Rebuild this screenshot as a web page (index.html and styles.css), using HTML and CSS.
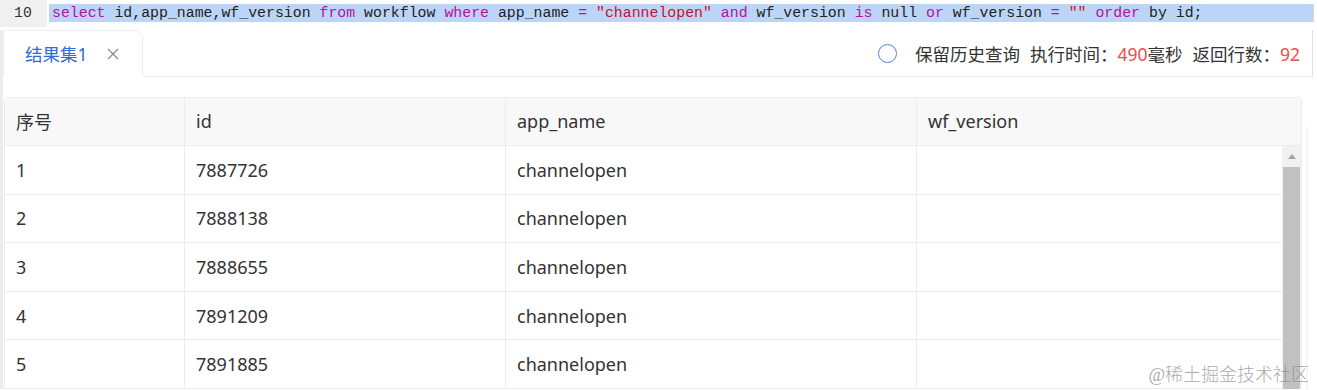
FILE: index.html
```html
<!DOCTYPE html>
<html lang="zh-CN">
<head>
    <meta charset="utf-8">
    <title>SQL 查询结果</title>
    <link rel="stylesheet" href="styles.css">
</head>
<body>
    <div class="editor">
        <div class="gutter">10</div>
        <div class="code"><span class="kw">select</span> id,app_name,wf_version <span class="kw">from</span> workflow <span class="kw">where</span> app_name <span class="kw">=</span> <span class="str">"channelopen"</span> <span class="kw">and</span> wf_version <span class="kw">is</span> null <span class="kw">or</span> wf_version <span class="kw">=</span> <span class="str">""</span> <span class="kw">order</span> by id;</div>
    </div>

    <div class="results">
        <div class="tabs">
            <div class="tab">
                <span class="tab-name">结果集1</span>
                <svg class="tab-close" width="12" height="12" viewBox="0 0 12 12">
                    <path d="M1 1 L11 11 M11 1 L1 11" stroke="#8c8c8c" stroke-width="1.3" fill="none"/>
                </svg>
            </div>
            <div class="tab-rest">
                <span class="radio"></span>
                <span class="info">保留历史查询</span>
                <span class="info">执行时间：<em>490</em>毫秒</span>
                <span class="info">返回行数：<em>92</em></span>
            </div>
        </div>

        <div class="table-wrap">
            <div class="table">
                <div class="row head">
                    <div class="cell">序号</div>
                    <div class="cell">id</div>
                    <div class="cell">app_name</div>
                    <div class="cell">wf_version</div>
                </div>
                <div class="body">
                    <div class="rows">
                        <div class="row">
                            <div class="cell">1</div><div class="cell">7887726</div><div class="cell">channelopen</div><div class="cell"></div>
                        </div>
                        <div class="row">
                            <div class="cell">2</div><div class="cell">7888138</div><div class="cell">channelopen</div><div class="cell"></div>
                        </div>
                        <div class="row">
                            <div class="cell">3</div><div class="cell">7888655</div><div class="cell">channelopen</div><div class="cell"></div>
                        </div>
                        <div class="row">
                            <div class="cell">4</div><div class="cell">7891209</div><div class="cell">channelopen</div><div class="cell"></div>
                        </div>
                        <div class="row">
                            <div class="cell">5</div><div class="cell">7891885</div><div class="cell">channelopen</div><div class="cell"></div>
                        </div>
                    </div>
                    <div class="scrollbar">
                        <div class="arrow"></div>
                        <div class="thumb"></div>
                    </div>
                </div>
            </div>
            <div class="edge"></div>
        </div>
    </div>

    <div class="watermark">@稀土掘金技术社区</div>
</body>
</html>
```

FILE: styles.css
```css
body {
    margin: 0;
    width: 1317px;
    height: 390px;
    overflow: hidden;
    background-color: #fff;
    font-family: "Noto Sans", "Noto Sans CJK SC", sans-serif;
    color: #333;
    position: relative;
}

/* editor line */
.editor {
    display: flex;
    height: 28px;
}

.gutter {
    width: 33px;
    padding-left: 14px;
    padding-top: 4px;
    height: 23px;
    background-color: #f0f0f0;
    font-family: "Liberation Mono", monospace;
    font-size: 14.8px;
    line-height: 18px;
    color: #333;
}

.code {
    margin-left: 2px;
    margin-top: 4px;
    width: 1261px;
    height: 18px;
    padding-left: 3px;
    background-color: #bcd5f7;
    border-right: 1px solid #d6d6d6;
    font-family: "Liberation Mono", monospace;
    font-size: 14.87px;
    line-height: 18px;
    white-space: pre;
    color: #222;
}

.kw {
    color: #b5119b;
}

.str {
    color: #c8102e;
}

/* result tabs */
.results {
    margin-top: 2px;
    border-left: 3px solid #ececec;
}

.tabs {
    display: flex;
    height: 47px;
}

.tab {
    width: 140px;
    height: 46px;
    display: flex;
    align-items: center;
    box-sizing: border-box;
    padding-left: 21px;
    border: 1px solid #efefef;
    border-bottom: none;
    border-radius: 2px 9px 0 0;
    background-color: #fff;
}

.tab-name {
    color: #2f6bd8;
    font-size: 17.5px;
}

.tab-close {
    margin-left: 19px;
    margin-top: 1px;
}

.tab-rest {
    flex: 1;
    display: flex;
    align-items: center;
    justify-content: flex-end;
    padding-right: 12px;
    margin-right: 4px;
    border-bottom: 1px solid #efefef;
    border-right: 1px solid #e0e0e0;
    font-size: 17.5px;
}

.radio {
    width: 17px;
    height: 17px;
    border: 1.5px solid #4f84e3;
    border-radius: 50%;
    margin-right: 8px;
}

.info {
    margin-left: 10px;
    color: #333;
}

.info em {
    font-style: normal;
    color: #ef4a4d;
}

/* table */
.table-wrap {
    display: flex;
    padding-top: 20px;
    padding-left: 1px;
}

.table {
    width: 1296px;
    border: 1px solid #ececec;
    border-radius: 4px 4px 0 0;
    border-bottom: none;
}

.row {
    display: grid;
    grid-template-columns: 180px 321px 411px 1fr;
    height: 48.6px;
    box-sizing: border-box;
    border-bottom: 1px solid #ececec;
}

.head {
    height: 48px;
    background-color: #f8f8f8;
}

.head .cell {
    padding-bottom: 2px;
}

.cell {
    display: flex;
    align-items: center;
    padding-left: 11px;
    font-size: 18px;
    border-right: 1px solid #ececec;
}

.cell:last-child {
    border-right: none;
}

.body {
    display: flex;
}

.rows {
    width: 1277px;
}

.scrollbar {
    width: 19px;
    display: flex;
    flex-direction: column;
    align-items: center;
    background-color: #f1f1f1;
}

.arrow {
    margin-top: 8px;
    width: 0;
    height: 0;
    border-left: 4px solid transparent;
    border-right: 4px solid transparent;
    border-bottom: 5px solid #a3a3a3;
}

.thumb {
    margin-top: 8px;
    width: 17px;
    flex: 1;
    background-color: #c1c1c1;
}

.edge {
    width: 2px;
    margin-left: 4px;
    margin-top: 30px;
    background-color: #f4f4f4;
}

.watermark {
    position: absolute;
    right: 8px;
    bottom: 4px;
    font-family: "Liberation Serif", "Noto Sans CJK SC", serif;
    font-size: 18px;
    font-weight: 300;
    color: rgba(130, 130, 130, 0.7);
}
```
